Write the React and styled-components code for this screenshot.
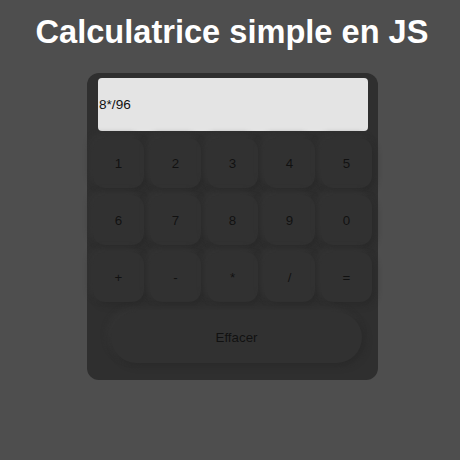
import React, { useState } from "react";
import styled, { createGlobalStyle } from "styled-components";

const GlobalStyle = createGlobalStyle`
  html, body {
    margin: 0;
    padding: 0;
    background: #4e4e4e;
    font-family: "Liberation Sans", Arial, sans-serif;
  }
`;

const Page = styled.main`
  width: 460px;
  height: 460px;
  box-sizing: border-box;
  padding-left: 4px;
  display: flex;
  flex-direction: column;
  align-items: center;
`;

const Title = styled.h1`
  margin: 13px 0 22px;
  font-size: 32.6px;
  line-height: 38px;
  font-weight: 700;
  color: #ffffff;
`;

const Calculator = styled.div`
  width: 291px;
  box-sizing: border-box;
  padding: 5px 5px 17px 6px;
  background: #2f2f2f;
  border-radius: 12px;
  display: flex;
  flex-direction: column;
  align-items: center;
`;

const Display = styled.div`
  width: 270px;
  height: 53px;
  box-sizing: border-box;
  margin-left: 1px;
  padding-left: 1px;
  background: #e4e4e4;
  border-radius: 4px;
  display: flex;
  align-items: center;
  font-size: 13.6px;
  color: #111;
`;

const Keys = styled.div`
  margin-top: 7px;
  display: grid;
  grid-template-columns: repeat(5, 51px);
  grid-auto-rows: 50px;
  column-gap: 6px;
  row-gap: 7px;
`;

const Key = styled.button`
  border: none;
  border-radius: 12px;
  background: #313131;
  box-shadow: 3px 3px 6px #2a2a2a, -3px -3px 6px #353535;
  font-family: inherit;
  font-size: 13.33px;
  color: #111;
  padding: 0;
  cursor: pointer;
`;

const Clear = styled(Key)`
  margin-top: 10px;
  margin-left: 8px;
  width: 251px;
  height: 51px;
  border-radius: 26px;
`;

const keys = ["1", "2", "3", "4", "5", "6", "7", "8", "9", "0", "+", "-", "*", "/", "="];

export default function App() {
  const [value, setValue] = useState("8*/96");
  return (
    <>
      <GlobalStyle />
      <Page>
        <Title>Calculatrice simple en JS</Title>
        <Calculator>
          <Display>{value}</Display>
          <Keys>
            {keys.map((k) => (
              <Key key={k} onClick={() => setValue(value + k)}>
                {k}
              </Key>
            ))}
          </Keys>
          <Clear onClick={() => setValue("")}>Effacer</Clear>
        </Calculator>
      </Page>
    </>
  );
}
